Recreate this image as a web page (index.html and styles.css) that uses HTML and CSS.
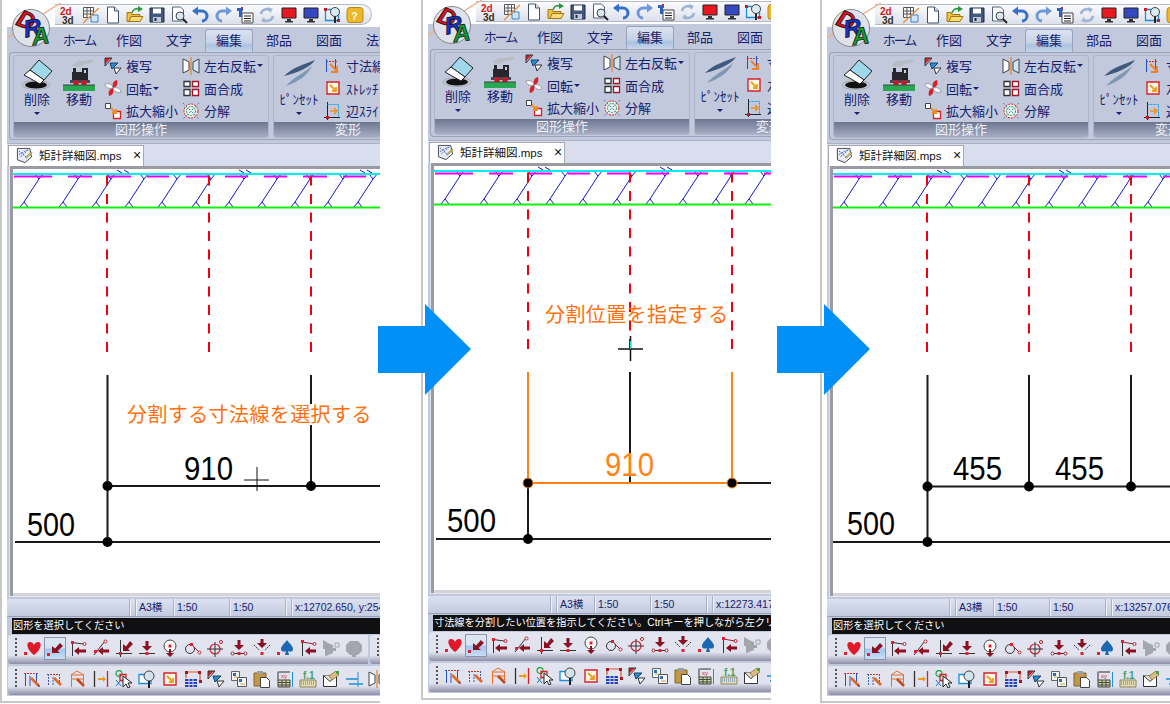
FILE: index.html
```html
<!DOCTYPE html>
<html lang="ja">
<head>
    <meta charset="UTF-8">
    <meta name="viewport" content="width=device-width, initial-scale=1.0">
    <title>寸法線の分割</title>
    <link rel="stylesheet" href="styles.css">
</head>
<body>
    <!-- Icons and shared drawing parts -->
    <svg class="sprite" xmlns="http://www.w3.org/2000/svg">
        <symbol id="i-2d3d" viewBox="0 0 18 18"><text class="ic-txt" x="0" y="8.500" fill="#d01818">2d</text><text class="ic-txt" x="2" y="17.500" fill="#3a3020">3d</text></symbol>
        <symbol id="i-grid" viewBox="0 0 18 18"><path d="M1.500 1.500h10v10h-10zM1.500 5h10M1.500 8h10M5 1.500v10M8.500 1.500v10" fill="#fff" stroke="#555"/><path d="M9 9h7v7H9z" fill="#cfe4f6" stroke="#3a88c8"/><path d="M1 17L17 2" stroke="#e89040" stroke-width="1.300"/></symbol>
        <symbol id="i-new" viewBox="0 0 18 18"><path d="M3.500 1h7l4 4v12h-11z" fill="#fff" stroke="#405068"/><path d="M10.500 1v4h4" fill="#dde4f0" stroke="#405068"/></symbol>
        <symbol id="i-open" viewBox="0 0 18 18"><path d="M1 6.500h4l1 2h8v7H1z" fill="#f0c040" stroke="#a07818"/><path d="M3 15.500l2-5h12l-3 5z" fill="#f9dd74" stroke="#a07818"/><path d="M6 7C7 3 10 2 13 3" fill="none" stroke="#289838" stroke-width="1.600"/><path d="M12 0l5 3-5 3z" fill="#289838"/></symbol>
        <symbol id="i-save" viewBox="0 0 18 18"><path d="M2 2h14v14H2z" fill="#44587c" stroke="#1c2a44"/><path d="M5 2.500h8v5H5z" fill="#fff"/><path d="M5 11h8v5H5z" fill="#c0c8d8"/><path d="M6.500 12h2v3h-2z" fill="#1c2a44"/></symbol>
        <symbol id="i-preview" viewBox="0 0 18 18"><path d="M2.500 1h8l3 3v11h-11z" fill="#fff" stroke="#506078"/><circle cx="10" cy="10" r="4" fill="#d8e6f4" stroke="#444"/><path d="M13 13l4 4" stroke="#222" stroke-width="2"/></symbol>
        <symbol id="i-undo" viewBox="0 0 18 18"><path d="M5 5h5a5 5 0 0 1 5 5 5 5 0 0 1-5 5" fill="none" stroke="#3670cc" stroke-width="3"/><path d="M0 5l6-4.500v9z" fill="#3670cc"/></symbol>
        <symbol id="i-redo" viewBox="0 0 18 18"><path d="M13 5H8a5 5 0 0 0-5 5 5 5 0 0 0 5 5" fill="none" stroke="#6f97dc" stroke-width="3"/><path d="M18 5l-6-4.500v9z" fill="#6f97dc"/></symbol>
        <symbol id="i-prop" viewBox="0 0 18 18"><path d="M6 7h11v10H6z" fill="#fff" stroke="#444"/><path d="M8 10h7M8 12.500h7M8 15h7" stroke="#222"/><path d="M1 2h6v3H1z" fill="#2a62c0"/><path d="M3 5h3v6H3z" fill="#2a62c0"/><path d="M5 1h2v2H5z" fill="#d82020"/></symbol>
        <symbol id="i-refresh" viewBox="0 0 18 18"><path d="M3 8a6 6 0 0 1 9-4" fill="none" stroke="#9db4d4" stroke-width="2.600"/><path d="M15 10a6 6 0 0 1-9 4" fill="none" stroke="#9db4d4" stroke-width="2.600"/><path d="M10 1l5 2-3 4zM8 17l-5-2 3-4z" fill="#9db4d4"/></symbol>
        <symbol id="i-monred" viewBox="0 0 18 18"><path d="M2 2h14v10H2z" fill="#e81820" stroke="#222"/><path d="M7 13h4v2H7zM5 15h8v1.500H5z" fill="#333"/></symbol>
        <symbol id="i-monblue" viewBox="0 0 18 18"><path d="M2 2h14v10H2z" fill="#3448c0" stroke="#222"/><path d="M7 13h4v2H7zM5 15h8v1.500H5z" fill="#333"/></symbol>
        <symbol id="i-zoomf" viewBox="0 0 18 18"><path d="M1.500 3.500h13v11h-13z" fill="none" stroke="#1890d8" stroke-width="1.300"/><path d="M0 2h3v3H0zM13 13h3v3h-3z" fill="#c81828"/><circle cx="11" cy="6" r="4.500" fill="#dbe9f2" stroke="#444"/><path d="M11 10.500V17" stroke="#222" stroke-width="2"/></symbol>
        <symbol id="i-help" viewBox="0 0 18 18"><rect x="1" y="1.500" width="16" height="15" rx="3" fill="#eeb828" stroke="#b88a18"/><text class="ic-txt" x="5.500" y="14" fill="#fff">?</text></symbol>

        <symbol id="i-eraser" viewBox="0 0 32 32"><ellipse cx="15" cy="26" rx="11" ry="3.500" fill="#111"/><ellipse cx="15" cy="26" rx="14" ry="4.500" fill="none" stroke="#aaa"/><path d="M18 1l13 11-8 9L9 11z" fill="#9fd8ea" stroke="#222"/><path d="M9 11l14 10-4 4L3 16z" fill="#fff" stroke="#222"/></symbol>
        <symbol id="i-loco" viewBox="0 0 32 32"><path d="M9 7c2-5 8-6 12-5 3-1 8-2 10 0-2 2-6 3-9 3-2 1-5 3-7 3z" fill="#b8bcc4"/><path d="M10 9h3v5h-3zM19 9h6v15H19zM9 13h11v10H9z" fill="#26262c"/><path d="M21 11h2v3h-2z" fill="#cfd4e2"/><path d="M7 21h20v3H7z" fill="#48485a"/><circle cx="13" cy="24" r="2.800" fill="#d01820"/><circle cx="21" cy="24" r="2.800" fill="#d01820"/><path d="M0 26h32v6H0z" fill="#28a850"/><path d="M0 26h32" stroke="#404048"/></symbol>
        <symbol id="i-tweezers" viewBox="0 0 32 32"><path d="M1 17C10 8 22 5 32 1 28 8 14 14 1 17z" fill="#3f5a7c"/><path d="M3 27c8-9 18-13 26-20-4 9-14 16-26 20z" fill="#7f97b4"/></symbol>
        <symbol id="i-copy" viewBox="0 0 18 18"><path d="M1 1h6L1 7z" fill="#d82028"/><path d="M1 1h7L1 9z" fill="none" stroke="#333"/><path d="M6 6h8l-6 6z" fill="#2a8cd8" stroke="#1a4068"/><path d="M10 11h7l-5 6z" fill="#fff" stroke="#333"/></symbol>
        <symbol id="i-rotate" viewBox="0 0 18 18"><path d="M9 9C8 5 9 2 13 1c1 4 0 7-4 8z" fill="#d82028"/><path d="M9 9c4-1 7 0 8 4-4 1-7 0-8-4z" fill="#fff" stroke="#777" stroke-width=".6"/><path d="M9 9c1 4 0 7-4 8-1-4 0-7 4-8z" fill="#d82028"/><path d="M9 9C5 10 2 9 1 5c4-1 7 0 8 4z" fill="#fff" stroke="#777" stroke-width=".6"/></symbol>
        <symbol id="i-scale" viewBox="0 0 18 18"><path d="M1.500 1.500h5v5h-5z" fill="#fff" stroke="#444"/><path d="M9.500 9.500h7v7h-7z" fill="#fff" stroke="#d82028" stroke-width="1.300"/><path d="M7 6l5 5M12 7v4H8" fill="none" stroke="#f08c18" stroke-width="1.800"/></symbol>
        <symbol id="i-mirror" viewBox="0 0 18 18"><path d="M1 2l6 3v8l-6 3z" fill="#fff" stroke="#444"/><path d="M17 2l-6 3v8l6 3z" fill="#cfe8f4" stroke="#444"/><path d="M9 0v18" stroke="#e88028" stroke-width="1.200"/></symbol>
        <symbol id="i-merge" viewBox="0 0 18 18"><path d="M2 10.500h6v6H2z" fill="#fff" stroke="#333" stroke-width="1.300"/><path d="M10.500 10.500h6v6h-6zM10.500 2.500h6v5h-6z" fill="#fff" stroke="#a01828" stroke-width="1.300"/><path d="M2 2.500h6v5H2z" fill="#fff" stroke="#333" stroke-width="1.300"/></symbol>
        <symbol id="i-explode" viewBox="0 0 18 18"><circle cx="9" cy="9" r="7" fill="#e8f0ee" stroke="#d82028" stroke-dasharray="2 1"/><circle cx="9" cy="9" r="4.500" fill="none" stroke="#18a058" stroke-dasharray="2 1"/><path d="M1 1l16 16M17 1L1 17" stroke="#4878b8" stroke-dasharray="2 2"/></symbol>
        <symbol id="i-dimbrush" viewBox="0 0 18 18"><path d="M2 4.500h11" stroke="#d83020" stroke-dasharray="2 1"/><path d="M2.500 2v13M11.500 2v10" stroke="#2850c0"/><path d="M6 7l8 8M13 9v6H7" fill="none" stroke="#f08028" stroke-width="1.800"/></symbol>
        <symbol id="i-stretch" viewBox="0 0 18 18"><path d="M3 3h12v12H3z" fill="#fff8e4" stroke="#d82028" stroke-width="1.400"/><path d="M6 6l6 6M12 8v4H8" fill="none" stroke="#e8a020" stroke-width="1.800"/></symbol>
        <symbol id="i-edge" viewBox="0 0 18 18"><path d="M3.500 0v18M0 15.500h16" stroke="#222"/><path d="M3.500 2.500h11v13" fill="none" stroke="#18a0e0" stroke-dasharray="2 1"/><path d="M6 9h6M10 6l3 3-3 3" fill="none" stroke="#f09020" stroke-width="1.600"/><path d="M2 14h3v3H2z" fill="#c01828"/></symbol>

        <symbol id="s-heart" viewBox="0 0 18 18"><path d="M11 16C3 10 3 3 7 3c2 0 3.500 1.500 4 3 .5-1.500 2-3 4-3 4 0 4 7-4 13z" fill="#e01828"/><path d="M1 13h3v3H1z" fill="#e02030"/></symbol>
        <symbol id="s-mid" viewBox="0 0 18 18"><path d="M6 14V7l3 2.500L14 4l3 3-5.500 5 2.500 2z" fill="#8c1022"/><path d="M1 14h3v3H1z" fill="#e02030"/></symbol>
        <symbol id="s-node" viewBox="0 0 18 18"><path d="M3.500 2v15M3.500 3.500L14 5" fill="none" stroke="#333"/><path d="M2 2h3v3H2z" fill="#e02030"/><circle cx="15.500" cy="5" r="1.500" fill="#fff" stroke="#c02030"/><path d="M5 12l5-4v2.500h7v3h-7V16z" fill="#8c1022"/></symbol>
        <symbol id="s-diag" viewBox="0 0 18 18"><path d="M2 16L13 2" stroke="#333"/><path d="M2 11h3v3H2z" fill="#e02030"/><circle cx="13.500" cy="2.500" r="1.500" fill="#fff" stroke="#c02030"/><path d="M6 12l5-4v2.500h6v3h-6V16z" fill="#8c1022"/></symbol>
        <symbol id="s-corner" viewBox="0 0 18 18"><path d="M5.500 1v17M1 14.500h16" stroke="#333"/><path d="M8 12V5l3 2.500L15 2l3 3-5 5 2 2z" fill="#8c1022"/><path d="M4 13h3v3H4z" fill="#e02030"/></symbol>
        <symbol id="s-down" viewBox="0 0 18 18"><path d="M1 14.500h16" stroke="#333"/><path d="M7.500 2h3v5H14l-5 5-5-5h3.500z" fill="#8c1022"/><path d="M7.500 13h3v3h-3z" fill="#e02030"/></symbol>
        <symbol id="s-circ" viewBox="0 0 18 18"><circle cx="9" cy="7" r="6" fill="#fff" stroke="#444"/><path d="M7.500 5.500h3v3h-3z" fill="#e02030"/><path d="M8 10h2v4h3l-4 4-4-4h3z" fill="#8c1022"/></symbol>
        <symbol id="s-tangent" viewBox="0 0 18 18"><circle cx="6" cy="10" r="4.500" fill="none" stroke="#333"/><path d="M7 5l8 8" stroke="#a02030"/><circle cx="15.500" cy="13.500" r="1.500" fill="#fff" stroke="#c02030"/><path d="M6 4h3v3H6z" fill="#e02030"/></symbol>
        <symbol id="s-cross" viewBox="0 0 18 18"><circle cx="8" cy="10" r="5" fill="none" stroke="#d02030" stroke-width="1.200"/><path d="M8 3v15M0 10h16" stroke="#333"/><circle cx="14" cy="3" r="1.500" fill="#fff" stroke="#a02030"/></symbol>
        <symbol id="s-dots" viewBox="0 0 18 18"><path d="M7.500 1h3v5H14l-5 5-5-5h3.500z" fill="#8c1022"/><path d="M1 14.500h16" stroke="#333"/><circle cx="2.500" cy="14.500" r="1.500" fill="#fff" stroke="#a02030"/><circle cx="15.500" cy="14.500" r="1.500" fill="#fff" stroke="#a02030"/><path d="M7.500 13h3v3h-3z" fill="#e02030"/></symbol>
        <symbol id="s-fan" viewBox="0 0 18 18"><path d="M7.500 0h3v4H14l-5 5-5-5h3.500z" fill="#8c1022"/><path d="M1 6l5 5M17 6l-5 5" stroke="#333" stroke-dasharray="2 1"/><path d="M7.500 13h3v3h-3z" fill="#e02030"/></symbol>
        <symbol id="s-spade" viewBox="0 0 18 18"><path d="M11 1c3 4 6 6 6 9 0 3-3 3-5 2l1 4H9l1-4c-2 1-5 1-5-2 0-3 3-5 6-9z" fill="#1c68b0"/><path d="M1 13h3v3H1z" fill="#e02030"/></symbol>
        <symbol id="s-hook" viewBox="0 0 18 18"><path d="M3.500 2v15" stroke="#333"/><path d="M3.500 3L15 5" stroke="#a02030"/><path d="M2 1h3v3H2z" fill="#e02030"/><circle cx="15.500" cy="5" r="1.500" fill="#fff" stroke="#c02030"/><path d="M6 12l5-4v2.500h6v3h-6V16z" fill="#8c1022"/></symbol>
        <symbol id="s-grey1" viewBox="0 0 18 18"><path d="M1 1l7 4 3 1v3h3v3h-3v2l-7 3H3V10H1z" fill="#a4a6ae"/><path d="M13 4h4v4h-4z" fill="none" stroke="#a4a6ae"/></symbol>
        <symbol id="s-grey2" viewBox="0 0 18 18"><path d="M5 2h8l4 4v6l-4 4h-2v2H7v-2H5l-4-4V6z" fill="#a4a6ae"/></symbol>

        <symbol id="t-dim1" viewBox="0 0 18 18"><path d="M1 3.500h14" stroke="#d83020" stroke-dasharray="2 1"/><path d="M2.500 3v13M13.500 3v9M7 6v10" stroke="#2850c0"/><path d="M8 8l7 7" stroke="#e06820" stroke-width="2.600"/><path d="M14 16l3 1-1-3z" fill="#801818"/></symbol>
        <symbol id="t-dim2" viewBox="0 0 18 18"><path d="M1 4.500h13" stroke="#c83020" stroke-dasharray="2 1"/><path d="M2.500 4v12M13.500 4v8M7 7v9" stroke="#4060b8" stroke-dasharray="2 1"/><path d="M8 8l7 7" stroke="#e06820" stroke-width="2.600"/></symbol>
        <symbol id="t-dim3" viewBox="0 0 18 18"><path d="M2 5L8 1l7 4M2 5h13" fill="none" stroke="#e87028"/><path d="M2.500 5v12M14.500 5v8M2 9h13" stroke="#e87028"/><path d="M8 9l7 7" stroke="#c84818" stroke-width="2.600"/></symbol>
        <symbol id="t-arrow" viewBox="0 0 18 18"><path d="M2.500 1v16" stroke="#333" stroke-width="1.300"/><path d="M15.500 1v16" stroke="#d82028" stroke-width="1.300"/><path d="M6 8h5V6l3 3-3 3v-2H6z" fill="#f09c18"/></symbol>
        <symbol id="t-select" viewBox="0 0 18 18"><circle cx="4" cy="3.500" r="3" fill="none" stroke="#28a848" stroke-width="1.300"/><path d="M1 10l5 6M6 10l-5 6" stroke="#2070c8"/><path d="M5 4.500h6v6H5z" fill="none" stroke="#d82028" stroke-width="1.300"/><path d="M8 6v11l3-3 2 4 2-1-2-4h4z" fill="#fff" stroke="#222"/></symbol>
        <symbol id="t-zoom" viewBox="0 0 18 18"><path d="M1 4.500h12v9H1z" fill="#fff" stroke="#1890d8" stroke-width="1.300"/><circle cx="11" cy="6" r="5" fill="#d4e4ec" stroke="#444"/><path d="M11 11v7" stroke="#222" stroke-width="2"/></symbol>
        <symbol id="t-table" viewBox="0 0 18 18"><path d="M2 8V2h14v9" fill="none" stroke="#d85828" stroke-width="1.200"/><path d="M1 1h3v3H1zM14 1h3v3h-3zM15 10h3v3h-3z" fill="#a01828"/><path d="M1 9h12v8H1z" fill="#2840b8"/><path d="M1 11.500h12M1 14.500h12M5 9v8M9 9v8" stroke="#cfd8f0"/></symbol>
        <symbol id="t-docs" viewBox="0 0 18 18"><path d="M1.500 1.500h8v9h-8z" fill="#f4f4f4" stroke="#666"/><path d="M7.500 7.500h9v9h-9z" fill="#f8f8f8" stroke="#555"/><path d="M3 3h3v3H3z" fill="#2a70c0"/><path d="M9 9h3v3H9z" fill="#2a70c0"/><path d="M4 7h3M10 14h5" stroke="#c8a848"/></symbol>
        <symbol id="t-paste" viewBox="0 0 18 18"><path d="M1 3h12v13H1z" fill="#c09848" stroke="#806428"/><path d="M4 1h6v3H4z" fill="#98a0a8"/><path d="M7.500 7.500h6l3 3v7h-9z" fill="#fff" stroke="#444"/></symbol>
        <symbol id="t-calc" viewBox="0 0 18 18"><path d="M2 1.500v9M14 2h-11" stroke="#333"/><text class="ic-mini" x="5" y="8" fill="#d82028">xy</text><path d="M2 10h12v7H2z" fill="#cfd898" stroke="#444"/><path d="M2 12.500h12M2 15h12M6 10v7M10 10v7" stroke="#444"/><path d="M16.500 2v15" stroke="#2090d8"/></symbol>
        <symbol id="t-keys" viewBox="0 0 18 18"><text class="ic-txt" x="4" y="9" fill="#48a060">f.1</text><path d="M1 10h16v7H1z" fill="#e4dcb4" stroke="#8a8460"/><path d="M2 12h14M2 14h14" stroke="#4878b8" stroke-dasharray="1 1"/></symbol>
        <symbol id="t-env" viewBox="0 0 18 18"><path d="M1.500 5.500h13v11h-13z" fill="#fff" stroke="#333"/><path d="M1.500 5.500l6.500 6 6.500-6" fill="#e8e4dc" stroke="#333"/><path d="M7 6l7-5 3 4-7 5z" fill="#d8bc88" stroke="#806428" stroke-width=".7"/><path d="M14 1h3v3h-3z" fill="#48a048"/></symbol>
        <symbol id="t-line" viewBox="0 0 18 18"><path d="M1 9h12M4 14h14" stroke="#1890d8" stroke-width="1.300"/><path d="M13 2v15" stroke="#1890d8"/></symbol>
        <symbol id="i-doc" viewBox="0 0 18 18"><path d="M1.500 1.500h13l2 9-7 6-8-3z" fill="#e8ecf4" stroke="#444"/><path d="M3 4l8 7M13 3l-9 8M3 8l9-5" stroke="#4868c0" stroke-dasharray="2 1"/><path d="M10 11l6-6 1 1-6 6z" fill="#e8c830" stroke="#555" stroke-width=".5"/></symbol>

        <!-- Roof hatching, same in all three drawings -->
        <g id="tie" fill="none" stroke="#1414d0" stroke-width="1"><path d="M-4 207L0 202l4 5M0 202l15-23M11 174l4 5 5-6"/></g>
        <g id="hatch">
            <use href="#tie" x="24"/><use href="#tie" x="63"/><use href="#tie" x="96"/><use href="#tie" x="129"/><use href="#tie" x="162"/><use href="#tie" x="196"/><use href="#tie" x="229"/><use href="#tie" x="262"/><use href="#tie" x="295"/><use href="#tie" x="328"/><use href="#tie" x="358"/>
            <path class="ln-cyan" d="M13 174h367"/>
            <path class="ln-green" d="M13 207.500h367"/>
            <path class="ln-magenta" d="M14 176.500h38M68 176.500h24M107 176.500h24M147 176.500h22M186 176.500h22M225 176.500h23M264 176.500h23M303 176.500h24M343 176.500h23"/>
            <path d="M117 170l5 3M124 170l5 3M239 170l5 3M246 170l5 3M360 170l5 3M367 170l5 3" fill="none" stroke="#1414d0"/>
            <path class="ln-dash" d="M107 352V168M209 352V168M311 352V168"/>
        </g>
    </svg>

    <main class="stage">
        <section class="shot" data-message="図形を選択してください" data-coord="x:12702.650, y:25480.000">
            <svg class="drawing" viewBox="13 169 367 423">
                <use href="#hatch"/>
                <path class="ln-black" d="M107.500 375V542M311 375V486M107 486H380M15 542H380"/>
                <rect x="124" y="404" width="250" height="21" fill="#fff"/>
                <text class="note" x="127" y="422">分割する寸法線を選択する</text>
                <text class="dim" x="184" y="480" textLength="49" lengthAdjust="spacingAndGlyphs">910</text>
                <text class="dim" x="27" y="536" textLength="48" lengthAdjust="spacingAndGlyphs">500</text>
                <circle cx="107.500" cy="486" r="5"/><circle cx="311" cy="486" r="5"/><circle cx="107.500" cy="542" r="5"/>
                <path d="M244 480h25M257 467v24" stroke="#111" stroke-width="1"/>
            </svg>
        </section>

        <section class="shot shot-middle" data-message="寸法線を分割したい位置を指示してください。Ctrlキーを押しながら左クリックで連続指定" data-coord="x:12273.417, y:25480.000">
            <svg class="drawing" viewBox="13 169 367 423">
                <use href="#hatch"/>
                <path class="ln-black" d="M209 375V486M311 486H380M107 486V542M15 542H380"/>
                <path d="M209 456V480" stroke="#1888d8" stroke-width="2"/>
                <path class="ln-orange" d="M107 375V486H311V375"/>
                <text class="note" x="124" y="325">分割位置を指定する</text>
                <text class="dim dim-orange" x="184" y="479" textLength="49" lengthAdjust="spacingAndGlyphs">910</text>
                <text class="dim" x="26" y="535" textLength="49" lengthAdjust="spacingAndGlyphs">500</text>
                <circle class="dot-picked" cx="107" cy="486" r="5"/><circle class="dot-picked" cx="311" cy="486" r="5"/><circle cx="107" cy="542" r="5"/>
                <path d="M197 352h25M209.500 339v25" stroke="#111" stroke-width="1.500"/>
                <path d="M209.500 344v8" stroke="#20d8d8" stroke-width="1"/>
            </svg>
        </section>

        <section class="shot shot-last" data-message="図形を選択してください" data-coord="x:13257.076, y:25480.000">
            <svg class="drawing" viewBox="13 169 367 423">
                <use href="#hatch"/>
                <path class="ln-black" d="M107.500 375V542M209 375V486M311 375V486M107 486.500H380M13 542H380"/>
                <text class="dim" x="133" y="480" textLength="49" lengthAdjust="spacingAndGlyphs">455</text>
                <text class="dim" x="235" y="480" textLength="49" lengthAdjust="spacingAndGlyphs">455</text>
                <text class="dim" x="27" y="535" textLength="48" lengthAdjust="spacingAndGlyphs">500</text>
                <circle cx="107.500" cy="486.500" r="5"/><circle cx="209" cy="486.500" r="5"/><circle cx="311" cy="486.500" r="5"/><circle cx="107.500" cy="542" r="5"/>
            </svg>
        </section>

        <svg class="arrow arrow-one" viewBox="0 0 94 92"><polygon points="0 22 47 22 47 0 93 45 47 91 47 69 0 69"/></svg>
        <svg class="arrow arrow-two" viewBox="0 0 94 92"><polygon points="0 22 47 22 47 0 93 45 47 91 47 69 0 69"/></svg>
    </main>

    <!-- The program window, the same chrome around each drawing -->
    <template id="window-template">
        <div class="window">
            <svg class="logo" viewBox="0 0 54 46">
                <path d="M0 35C15 25 40 8 54 0" fill="none" stroke="#f0b090" stroke-width="1.500"/>
                <circle cx="24" cy="25" r="18.500" fill="#dfe2ea" stroke="#888"/>
                <text class="logo-d" x="10" y="25" transform="rotate(22 18 18)">D</text>
                <text class="logo-r" x="17" y="33" transform="rotate(-10 26 26)">R</text>
                <text class="logo-a" x="25" y="41" transform="rotate(-8 34 34)">A</text>
            </svg>
            <div class="qat">
                <div class="qat-pill">
                    <svg class="ic"><use href="#i-2d3d"/></svg>
                    <svg class="ic"><use href="#i-grid"/></svg>
                    <svg class="ic"><use href="#i-new"/></svg>
                    <svg class="ic"><use href="#i-open"/></svg>
                    <svg class="ic"><use href="#i-save"/></svg>
                    <svg class="ic"><use href="#i-preview"/></svg>
                    <svg class="ic"><use href="#i-undo"/></svg>
                    <svg class="ic"><use href="#i-redo"/></svg>
                    <svg class="ic"><use href="#i-prop"/></svg>
                    <svg class="ic"><use href="#i-refresh"/></svg>
                    <svg class="ic"><use href="#i-monred"/></svg>
                    <svg class="ic"><use href="#i-monblue"/></svg>
                    <svg class="ic"><use href="#i-zoomf"/></svg>
                    <svg class="ic"><use href="#i-help"/></svg>
                </div>
            </div>
            <nav class="tabs">
                <span class="tab tab-kana">ホーム</span>
                <span class="tab">作図</span>
                <span class="tab">文字</span>
                <span class="tab active">編集</span>
                <span class="tab">部品</span>
                <span class="tab">図面</span>
                <span class="tab">法規</span>
            </nav>
            <div class="ribbon">
                <div class="group group-shape">
                    <div class="group-body">
                        <div class="big big-delete"><svg class="ic-big"><use href="#i-eraser"/></svg><span>削除</span><i class="caret"></i></div>
                        <div class="big big-move"><svg class="ic-big"><use href="#i-loco"/></svg><span>移動</span></div>
                        <div class="col col-first">
                            <div class="row"><svg class="ic"><use href="#i-copy"/></svg>複写</div>
                            <div class="row"><svg class="ic"><use href="#i-rotate"/></svg>回転<i class="caret"></i></div>
                            <div class="row"><svg class="ic"><use href="#i-scale"/></svg>拡大縮小</div>
                        </div>
                        <div class="col">
                            <div class="row"><svg class="ic"><use href="#i-mirror"/></svg>左右反転<i class="caret"></i></div>
                            <div class="row"><svg class="ic"><use href="#i-merge"/></svg>面合成</div>
                            <div class="row"><svg class="ic"><use href="#i-explode"/></svg>分解</div>
                        </div>
                    </div>
                    <div class="group-title">図形操作</div>
                </div>
                <div class="group group-deform">
                    <div class="group-body">
                        <div class="big big-tweezers"><svg class="ic-big"><use href="#i-tweezers"/></svg><span>ﾋﾟﾝｾｯﾄ</span><i class="caret"></i></div>
                        <div class="col">
                            <div class="row"><svg class="ic"><use href="#i-dimbrush"/></svg>寸法線編集</div>
                            <div class="row"><svg class="ic"><use href="#i-stretch"/></svg>ｽﾄﾚｯﾁ</div>
                            <div class="row"><svg class="ic"><use href="#i-edge"/></svg>辺ｽﾗｲﾄﾞ</div>
                        </div>
                    </div>
                    <div class="group-title">変形</div>
                </div>
            </div>
            <div class="docbar">
                <div class="doctab"><svg class="ic-doc"><use href="#i-doc"/></svg><span class="doc-name">矩計詳細図.mps</span><span class="doc-close">×</span></div>
            </div>
            <div class="canvas"></div>
            <div class="status">
                <span class="cell cell-gap"></span>
                <span class="cell cell-a">A3横</span>
                <span class="cell cell-b">1:50</span>
                <span class="cell cell-b">1:50</span>
                <span class="cell cell-gap"></span>
                <span class="cell coord"></span>
            </div>
            <div class="message"></div>
            <div class="toolrow">
                <div class="toolbar toolbar-snap">
                    <i class="grip"></i>
                    <span class="btn"><svg class="ic"><use href="#s-heart"/></svg></span>
                    <span class="btn on"><svg class="ic"><use href="#s-mid"/></svg></span>
                    <span class="btn"><svg class="ic"><use href="#s-node"/></svg></span>
                    <span class="btn"><svg class="ic"><use href="#s-diag"/></svg></span>
                    <span class="btn"><svg class="ic"><use href="#s-corner"/></svg></span>
                    <span class="btn"><svg class="ic"><use href="#s-down"/></svg></span>
                    <span class="btn"><svg class="ic"><use href="#s-circ"/></svg></span>
                    <span class="btn"><svg class="ic"><use href="#s-tangent"/></svg></span>
                    <span class="btn"><svg class="ic"><use href="#s-cross"/></svg></span>
                    <span class="btn"><svg class="ic"><use href="#s-dots"/></svg></span>
                    <span class="btn"><svg class="ic"><use href="#s-fan"/></svg></span>
                    <span class="btn"><svg class="ic"><use href="#s-spade"/></svg></span>
                    <span class="btn"><svg class="ic"><use href="#s-hook"/></svg></span>
                    <span class="btn"><svg class="ic"><use href="#s-grey1"/></svg></span>
                    <span class="btn"><svg class="ic"><use href="#s-grey2"/></svg></span>
                </div>
                <div class="toolbar toolbar-rest"><i class="grip"></i></div>
            </div>
            <div class="toolrow">
                <div class="toolbar">
                    <i class="grip"></i>
                    <span class="btn"><svg class="ic"><use href="#t-dim1"/></svg></span>
                    <span class="btn"><svg class="ic"><use href="#t-dim2"/></svg></span>
                    <span class="btn"><svg class="ic"><use href="#t-dim3"/></svg></span>
                    <span class="btn"><svg class="ic"><use href="#t-arrow"/></svg></span>
                    <span class="btn"><svg class="ic"><use href="#t-select"/></svg></span>
                    <span class="btn"><svg class="ic"><use href="#t-zoom"/></svg></span>
                    <span class="btn"><svg class="ic"><use href="#i-stretch"/></svg></span>
                    <span class="btn"><svg class="ic"><use href="#t-table"/></svg></span>
                    <span class="btn"><svg class="ic"><use href="#i-copy"/></svg></span>
                    <span class="btn"><svg class="ic"><use href="#t-docs"/></svg></span>
                    <span class="btn"><svg class="ic"><use href="#t-paste"/></svg></span>
                    <span class="btn"><svg class="ic"><use href="#t-calc"/></svg></span>
                    <span class="btn"><svg class="ic"><use href="#t-keys"/></svg></span>
                    <span class="btn"><svg class="ic"><use href="#t-env"/></svg></span>
                    <span class="btn"><svg class="ic"><use href="#t-line"/></svg></span>
                    <span class="btn"><svg class="ic"><use href="#i-mirror"/></svg></span>
                </div>
            </div>
        </div>
    </template>

    <script>
        // Wrap each drawing in a copy of the program window
        const windowTemplate = document.getElementById('window-template');
        document.querySelectorAll('.shot').forEach(shot => {
            const copy = windowTemplate.content.cloneNode(true);
            copy.querySelector('.canvas').appendChild(shot.querySelector('.drawing'));
            copy.querySelector('.message').textContent = shot.dataset.message;
            copy.querySelector('.coord').textContent = shot.dataset.coord;
            shot.appendChild(copy);
        });
    </script>
</body>
</html>
```

FILE: styles.css
```css
body {
    margin: 0;
    background-color: #fff;
    font-family: "Liberation Sans", "Noto Sans CJK JP", sans-serif;
    color: #16226e;
    overflow: hidden;
}
.sprite {
    display: none;
}
.stage {
    position: relative;
    display: flex;
    align-items: flex-start;
    width: 1170px;
    height: 704px;
    overflow: hidden;
}

/* One screenshot of the program */
.shot {
    flex: none;
    box-sizing: border-box;
    width: 380px;
    height: 703px;
    padding-left: 5px;
    border-left: 2px solid #c8c8c8;
    border-bottom: 2px solid #c8c8c8;
    overflow: hidden;
}
.shot-middle {
    width: 350px;
    margin-left: 41px;
    margin-top: -3px;
}
.shot-last {
    width: 350px;
    margin-left: 49px;
}
.window {
    position: relative;
    display: flex;
    flex-direction: column;
    width: 373px;
    height: 696px;
    background-color: #c2c9dc;
}

/* Title row with quick access icons */
.logo {
    position: absolute;
    left: 0;
    top: 3px;
    width: 54px;
    height: 46px;
    z-index: 2;
}
.logo text {
    font-family: "Liberation Sans", sans-serif;
    font-weight: bold;
    font-style: italic;
    font-size: 24px;
    stroke: #111;
    stroke-width: 0.8px;
}
.logo-d { fill: #e01020; }
.logo-r { fill: #1830d0; }
.logo-a { fill: #10a030; }
.qat {
    height: 27px;
    background-color: #fff;
    padding: 4px 0 2px 48px;
    box-sizing: border-box;
}
.qat-pill {
    display: flex;
    align-items: center;
    gap: 4px;
    box-sizing: border-box;
    width: 317px;
    height: 21px;
    padding-left: 5px;
    border: 1px solid #b4bac8;
    border-left: 0;
    border-radius: 0 11px 11px 0;
    background: linear-gradient(#fbfbfd, #dce0ea);
}
.ic {
    flex: none;
    width: 18px;
    height: 18px;
}
.ic-txt {
    font-family: "Liberation Sans", sans-serif;
    font-weight: bold;
    font-size: 10px;
}
.ic-mini {
    font-family: "Liberation Sans", sans-serif;
    font-size: 6px;
}

/* Ribbon tabs */
.tabs {
    display: flex;
    gap: 2px;
    height: 25px;
    padding-left: 48px;
    box-sizing: border-box;
    font-size: 13px;
}
.tab {
    flex: none;
    width: 48px;
    padding-top: 3px;
    text-align: center;
    white-space: nowrap;
}
.tab-kana {
    letter-spacing: -2px;
}
.tab.active {
    box-sizing: border-box;
    margin-top: 2px;
    padding-top: 0;
    border: 1px solid #98a4bc;
    border-bottom: 0;
    border-radius: 3px 3px 0 0;
    background: linear-gradient(#dbe2f0 0, #c8d3e6 55%, #a9c3e0 70%, #c8d6ea 100%);
}

/* Ribbon */
.ribbon {
    display: flex;
    gap: 4px;
    height: 88px;
    margin: 0 0 3px 2px;
    padding: 2px 0 1px 3px;
    box-sizing: border-box;
    border: 1px solid #9aa3ba;
    border-right: 0;
    border-radius: 4px 0 0 4px;
    font-size: 13px;
    white-space: nowrap;
}
.group {
    flex: none;
    display: flex;
    flex-direction: column;
    box-sizing: border-box;
    border: 1px solid #aeb5ca;
    border-radius: 3px;
    overflow: hidden;
}
.group-shape {
    width: 256px;
}
.group-deform {
    width: 150px;
}
.group-body {
    flex: 1;
    display: flex;
}
.group-title {
    height: 16px;
    line-height: 15px;
    font-size: 13px;
    text-align: center;
    color: #eef0f6;
    background: linear-gradient(#6d7690, #a6adc4);
}
.big {
    display: flex;
    flex-direction: column;
    align-items: center;
    padding-top: 3px;
    line-height: 18px;
}
.big-delete { width: 46px; }
.big-move { width: 38px; }
.big-tweezers { width: 50px; }
.ic-big {
    width: 32px;
    height: 32px;
}
.big .caret {
    margin: 3px 0 0;
}
.col {
    display: flex;
    flex-direction: column;
    margin-top: -1.500px;
}
.col-first {
    width: 78px;
    margin-left: 6px;
}
.row {
    display: flex;
    align-items: center;
    gap: 4px;
    height: 22.500px;
}
.caret {
    width: 0;
    height: 0;
    margin-left: 1px;
    border-left: 3px solid transparent;
    border-right: 3px solid transparent;
    border-top: 3px solid #16226e;
}
.row .caret {
    margin-left: -3px;
}

/* Document tab */
.docbar {
    height: 23px;
    padding: 1px 0 0 1px;
    box-sizing: border-box;
    background-color: #d8deee;
    border-top: 1px solid #aab2c8;
}
.doctab {
    display: flex;
    align-items: center;
    box-sizing: border-box;
    width: 136px;
    height: 21px;
    padding: 0 0 2px 7px;
    background-color: #fff;
    border: 1px solid #a8a8b0;
    border-bottom: 0;
    font-size: 11.500px;
    color: #111;
    white-space: nowrap;
}
.ic-doc {
    width: 17px;
    height: 17px;
    margin-right: 6px;
}
.doc-name {
    width: 94px;
}
.doc-close {
    font-size: 14px;
}

/* Drawing area */
.canvas {
    flex: 1;
    min-height: 0;
    margin-left: 2px;
    background-color: #fff;
    border-left: 1px solid #dfe3ee;
    border-bottom: 1px solid #e8e8ec;
    box-shadow: inset 3px 3px 0 #9a9aa2, inset 0 -3px 0 #d4d4d8;
    overflow: hidden;
    padding: 3px 0 0 3px;
}
.drawing {
    display: block;
    width: 367px;
    height: 423px;
}
.drawing circle {
    fill: #000;
}
.drawing .dot-picked {
    stroke: #ff8418;
    stroke-width: 1px;
}
.ln-cyan { stroke: #00f0f0; stroke-width: 2; }
.ln-green { stroke: #10f010; stroke-width: 2; }
.ln-magenta { stroke: #f000f0; stroke-width: 2; }
.ln-dash { stroke: #f00010; stroke-width: 2; stroke-dasharray: 10 8.500; fill: none; }
.ln-black { stroke: #1a1a1a; stroke-width: 2; fill: none; }
.ln-orange { stroke: #ff8418; stroke-width: 2; fill: none; }
.note {
    font-family: "Noto Sans CJK JP", sans-serif;
    font-size: 20px;
    letter-spacing: 0.400px;
    fill: #ff6f10;
}
.dim {
    font-family: "Liberation Sans", sans-serif;
    font-size: 34px;
    fill: #000;
}
.dim-orange {
    fill: #ff8418;
}

/* Status and message bars */
.status {
    display: flex;
    height: 18px;
    margin-top: 2px;
    padding-left: 122px;
    box-sizing: border-box;
    background: linear-gradient(#dbe1f0, #c4cbe0);
    border-bottom: 1px solid #98a0b8;
    font-size: 10.500px;
    line-height: 17px;
    white-space: nowrap;
}
.cell {
    flex: none;
    box-sizing: border-box;
    height: 17px;
    padding-left: 4px;
    box-shadow: inset 1px 0 0 #a8b0c8, inset 2px 0 0 #eef1f8;
}
.cell-gap { width: 6px; padding: 0; }
.cell-a { width: 38px; }
.cell-b { width: 56px; }
.message {
    height: 16px;
    margin: 1px 0 1px 5px;
    padding-left: 1px;
    background-color: #101012;
    color: #fff;
    font-size: 10.200px;
    line-height: 16px;
    white-space: nowrap;
    overflow: hidden;
}

/* Bottom toolbars */
.toolrow {
    display: flex;
    gap: 2px;
    height: 30px;
    margin-left: 1px;
}
.toolrow + .toolrow {
    margin-top: 1px;
}
.toolbar {
    flex: 1;
    display: flex;
    align-items: center;
    gap: 1px;
    box-sizing: border-box;
    padding: 0 0 3px 7px;
    height: 29px;
    border-radius: 3px 0 0 3px;
    background: linear-gradient(#e2e4ef 0, #e0e2ed 70%, #8f8eaa 100%);
}
.toolbar-snap {
    flex: none;
    width: 360px;
}
.grip {
    flex: none;
    width: 2px;
    height: 20px;
    margin-right: 3px;
    background: repeating-linear-gradient(#555 0 2px, transparent 2px 4px);
}
.btn {
    flex: none;
    display: flex;
    align-items: center;
    justify-content: center;
    box-sizing: border-box;
    width: 22px;
    height: 23px;
}
.btn.on {
    border: 1px solid #8a94aa;
    background: linear-gradient(#dde6f2 0, #d8e4f2 45%, #a0c8f0 55%, #c8def4 100%);
}

/* Big blue arrows between the shots */
.arrow {
    position: absolute;
    top: 304px;
    width: 94px;
    height: 92px;
}
.arrow polygon {
    fill: #0090f8;
}
.arrow-one { left: 378px; }
.arrow-two { left: 777px; }
```
